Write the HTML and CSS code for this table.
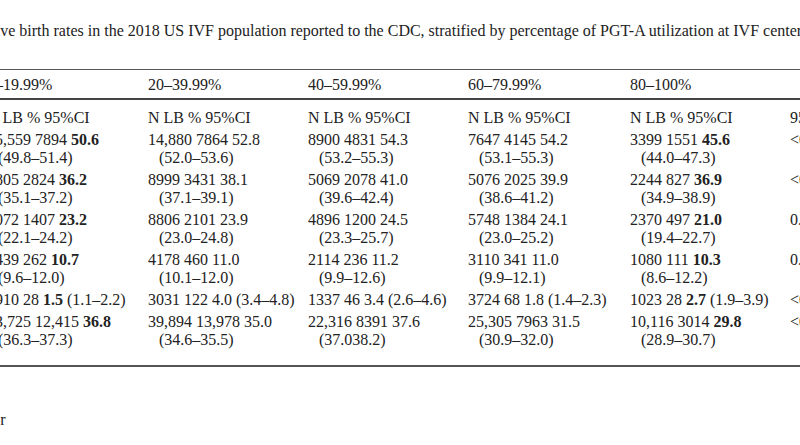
FILE: index.html
```html
<!DOCTYPE html>
<html lang="en">
<head>
<meta charset="utf-8">
<title>Table 2</title>
<link rel="stylesheet" href="styles.css">
</head>
<body>
<div class="page">
  <p class="caption">Live birth rates in the 2018 US IVF population reported to the CDC, stratified by percentage of PGT-A utilization at IVF centers</p>
  <table class="data">
    <colgroup>
      <col class="c1"><col class="c2"><col class="c3"><col class="c4"><col class="c5"><col class="c6">
    </colgroup>
    <thead>
      <tr class="group">
        <th>0–19.99%</th><th>20–39.99%</th><th>40–59.99%</th><th>60–79.99%</th><th>80–100%</th><th></th>
      </tr>
      <tr class="sub">
        <th>N LB % 95%CI</th><th>N LB % 95%CI</th><th>N LB % 95%CI</th><th>N LB % 95%CI</th><th>N LB % 95%CI</th><th>95%CI</th>
      </tr>
    </thead>
    <tbody>
      <tr>
        <td>15,559 7894 <b>50.6</b><span class="ci">(49.8–51.4)</span></td>
        <td>14,880 7864 52.8<span class="ci">(52.0–53.6)</span></td>
        <td>8900 4831 54.3<span class="ci">(53.2–55.3)</span></td>
        <td>7647 4145 54.2<span class="ci">(53.1–55.3)</span></td>
        <td>3399 1551 <b>45.6</b><span class="ci">(44.0–47.3)</span></td>
        <td>&lt;0.001</td>
      </tr>
      <tr>
        <td>7805 2824 <b>36.2</b><span class="ci">(35.1–37.2)</span></td>
        <td>8999 3431 38.1<span class="ci">(37.1–39.1)</span></td>
        <td>5069 2078 41.0<span class="ci">(39.6–42.4)</span></td>
        <td>5076 2025 39.9<span class="ci">(38.6–41.2)</span></td>
        <td>2244 827 <b>36.9</b><span class="ci">(34.9–38.9)</span></td>
        <td>&lt;0.001</td>
      </tr>
      <tr>
        <td>6072 1407 <b>23.2</b><span class="ci">(22.1–24.2)</span></td>
        <td>8806 2101 23.9<span class="ci">(23.0–24.8)</span></td>
        <td>4896 1200 24.5<span class="ci">(23.3–25.7)</span></td>
        <td>5748 1384 24.1<span class="ci">(23.0–25.2)</span></td>
        <td>2370 497 <b>21.0</b><span class="ci">(19.4–22.7)</span></td>
        <td>0.02</td>
      </tr>
      <tr>
        <td>2439 262 <b>10.7</b><span class="ci">(9.6–12.0)</span></td>
        <td>4178 460 11.0<span class="ci">(10.1–12.0)</span></td>
        <td>2114 236 11.2<span class="ci">(9.9–12.6)</span></td>
        <td>3110 341 11.0<span class="ci">(9.9–12.1)</span></td>
        <td>1080 111 <b>10.3</b><span class="ci">(8.6–12.2)</span></td>
        <td>0.04</td>
      </tr>
      <tr>
        <td>1910 28 <b>1.5</b> (1.1–2.2)</td>
        <td>3031 122 4.0 (3.4–4.8)</td>
        <td>1337 46 3.4 (2.6–4.6)</td>
        <td>3724 68 1.8 (1.4–2.3)</td>
        <td>1023 28 <b>2.7</b> (1.9–3.9)</td>
        <td>&lt;0.001</td>
      </tr>
      <tr class="last">
        <td>33,725 12,415 <b>36.8</b><span class="ci">(36.3–37.3)</span></td>
        <td>39,894 13,978 35.0<span class="ci">(34.6–35.5)</span></td>
        <td>22,316 8391 37.6<span class="ci">(37.038.2)</span></td>
        <td>25,305 7963 31.5<span class="ci">(30.9–32.0)</span></td>
        <td>10,116 3014 <b>29.8</b><span class="ci">(28.9–30.7)</span></td>
        <td>&lt;0.001</td>
      </tr>
    </tbody>
  </table>
  <p class="note">for</p>
</div>
</body>
</html>
```

FILE: styles.css
```css
html, body {
  margin: 0;
  padding: 0;
  background: #fff;
}

body {
  width: 800px;
  height: 445px;
  overflow: hidden;
  font-family: "Liberation Serif", "Times New Roman", serif;
  font-size: 16px;
  color: #222;
}

.page {
  padding-top: 21px;
}

.caption {
  margin: 0 0 0 -14px;
  line-height: 20px;
  white-space: nowrap;
}

.data {
  margin: 28px 0 0 -13px;
  width: 963px;
  table-layout: fixed;
  border-collapse: collapse;
  border-top: 1px solid #555;
  border-bottom: 2px solid #555;
}

.data .c1 { width: 161px; }
.data .c2 { width: 160px; }
.data .c3 { width: 160px; }
.data .c4 { width: 162px; }
.data .c5 { width: 160px; }
.data .c6 { width: 160px; }

.data th,
.data td {
  padding: 0;
  text-align: left;
  vertical-align: top;
  font-weight: normal;
  line-height: 18px;
  white-space: nowrap;
}

.data b {
  font-weight: bold;
}

.group th {
  padding: 6px 0 4px;
  border-bottom: 2px solid #444;
}

.sub th {
  padding: 9px 0 2px;
}

.data tbody td {
  padding: 2px 0;
}

.data tr.last td {
  padding-bottom: 16px;
}

.ci {
  display: block;
  padding-left: 11px;
}

.note {
  margin: 43px 0 0 -13px;
  line-height: 20px;
}
```
